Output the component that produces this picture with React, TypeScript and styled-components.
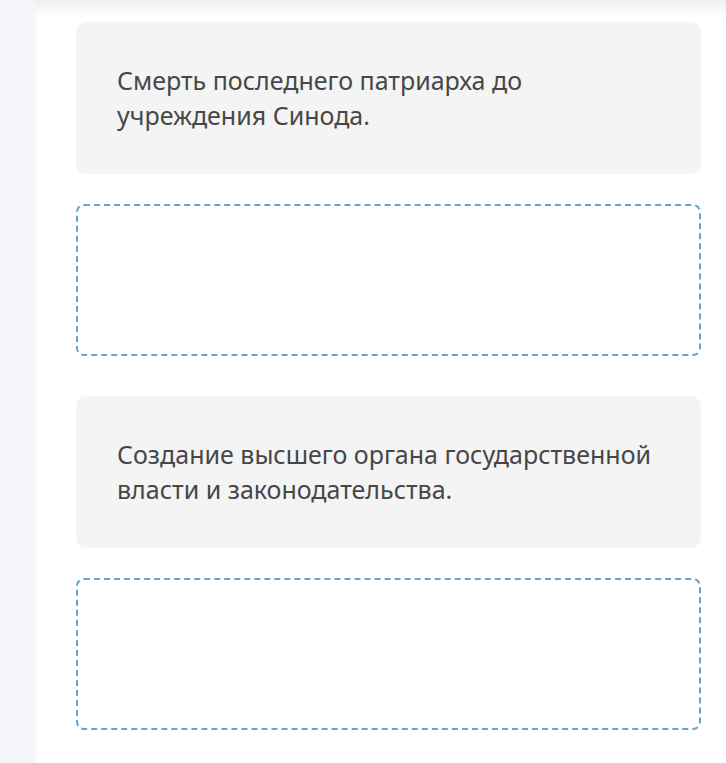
import React from "react";
import styled, { createGlobalStyle } from "styled-components";

const GlobalStyle = createGlobalStyle`
  html, body {
    margin: 0;
    padding: 0;
    background: #ffffff;
  }
  body {
    font-family: "Noto Sans", "Open Sans", Arial, sans-serif;
  }
`;

const Page = styled.div`
  display: flex;
  min-height: 763px;
  background: #ffffff;
`;

const SideRail = styled.aside`
  width: 35px;
  flex: none;
  background: #f3f5f9;
  box-shadow: 1px 0 3px rgba(0, 0, 0, 0.03);
`;

const Main = styled.main`
  position: relative;
  flex: 1;
  padding: 22px 25px 30px 41px;
  display: flex;
  flex-direction: column;
  gap: 30px;

  &::before {
    content: "";
    position: absolute;
    left: 0;
    right: 0;
    top: 0;
    height: 18px;
    background: linear-gradient(#efefef, rgba(255, 255, 255, 0));
    pointer-events: none;
  }
`;

const Statement = styled.div`
  box-sizing: border-box;
  height: 152px;
  background: #f4f4f4;
  border-radius: 10px;
  padding: 0 41px;
  display: flex;
  align-items: center;
  font-size: 25px;
  line-height: 35px;
  color: #474747;
`;

const DropZone = styled.div<{ $after?: number }>`
  box-sizing: border-box;
  height: 152px;
  border: 2px dashed #67a3cb;
  border-radius: 8px;
  margin-bottom: ${(p) => p.$after ?? 0}px;
`;

const pairs = [
  "Смерть последнего патриарха до учреждения Синода.",
  "Создание высшего органа государственной власти и законодательства.",
];

export default function App() {
  return (
    <>
      <GlobalStyle />
      <Page>
        <SideRail />
        <Main>
          {pairs.map((text, i) => (
            <React.Fragment key={i}>
              <Statement>{text}</Statement>
              <DropZone $after={i === 0 ? 10 : 0} />
            </React.Fragment>
          ))}
        </Main>
      </Page>
    </>
  );
}
